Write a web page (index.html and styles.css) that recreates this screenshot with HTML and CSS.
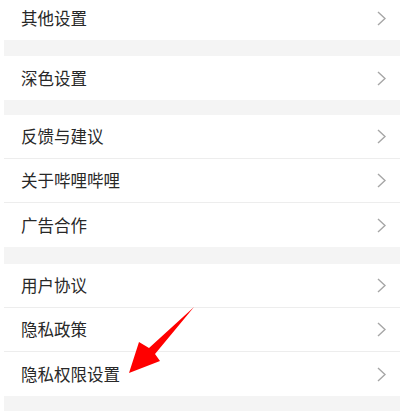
FILE: index.html
```html
<!DOCTYPE html>
<html lang="zh-CN">
<head>
<meta charset="utf-8">
<title>设置</title>
<link rel="stylesheet" href="styles.css">
</head>
<body>
<div class="page">
  <div class="group">
    <div class="row first"><span class="label">其他设置</span><svg class="chev" viewBox="0 0 9 15"><path d="M1 1 L8 7.5 L1 14" /></svg></div>
  </div>
  <div class="gap g16"></div>
  <div class="group">
    <div class="row"><span class="label">深色设置</span><svg class="chev" viewBox="0 0 9 15"><path d="M1 1 L8 7.5 L1 14" /></svg></div>
  </div>
  <div class="gap g15"></div>
  <div class="group">
    <div class="row line"><span class="label">反馈与建议</span><svg class="chev" viewBox="0 0 9 15"><path d="M1 1 L8 7.5 L1 14" /></svg></div>
    <div class="row line"><span class="label">关于哔哩哔哩</span><svg class="chev" viewBox="0 0 9 15"><path d="M1 1 L8 7.5 L1 14" /></svg></div>
    <div class="row"><span class="label">广告合作</span><svg class="chev" viewBox="0 0 9 15"><path d="M1 1 L8 7.5 L1 14" /></svg></div>
  </div>
  <div class="gap g17"></div>
  <div class="group">
    <div class="row line"><span class="label">用户协议</span><svg class="chev" viewBox="0 0 9 15"><path d="M1 1 L8 7.5 L1 14" /></svg></div>
    <div class="row line"><span class="label">隐私政策</span><svg class="chev" viewBox="0 0 9 15"><path d="M1 1 L8 7.5 L1 14" /></svg></div>
    <div class="row"><span class="label">隐私权限设置</span><svg class="chev" viewBox="0 0 9 15"><path d="M1 1 L8 7.5 L1 14" /></svg></div>
  </div>
  <div class="gap rest"></div>
</div>
<svg class="arrow" viewBox="0 0 400 411" width="400" height="411">
  <polygon points="194,307 155,354 160,361 129,373 139,342 149,348" fill="#ff0000"/>
</svg>
</body>
</html>
```
FILE: styles.css
```css
html, body {
  margin: 0;
  padding: 0;
  background: #ffffff;
  width: 400px;
  height: 411px;
  overflow: hidden;
}
body {
  position: relative;
  font-family: "Noto Sans CJK SC", "Noto Sans", sans-serif;
}
.page {
  margin-left: 4px;
  background: #f4f4f4;
  display: flex;
  flex-direction: column;
}
.group {
  background: #ffffff;
  display: flex;
  flex-direction: column;
}
.row {
  box-sizing: border-box;
  height: 44px;
  display: flex;
  align-items: center;
  justify-content: space-between;
  padding: 0 14px 0 17px;
}
.row.first {
  height: 40px;
  padding-bottom: 4px;
}
.row.line {
  border-bottom: 1px solid #ededed;
}
.label {
  font-size: 16.5px;
  color: #282828;
  line-height: 1;
}
.chev {
  width: 9px;
  height: 15px;
  fill: none;
  stroke: #a6a6a6;
  stroke-width: 1.4;
}
.gap { background: #f4f4f4; }
.g16 { height: 16px; }
.g15 { height: 15px; }
.g17 { height: 17px; }
.rest { height: 20px; }
.arrow {
  position: absolute;
  left: 0;
  top: 0;
  pointer-events: none;
}
```
